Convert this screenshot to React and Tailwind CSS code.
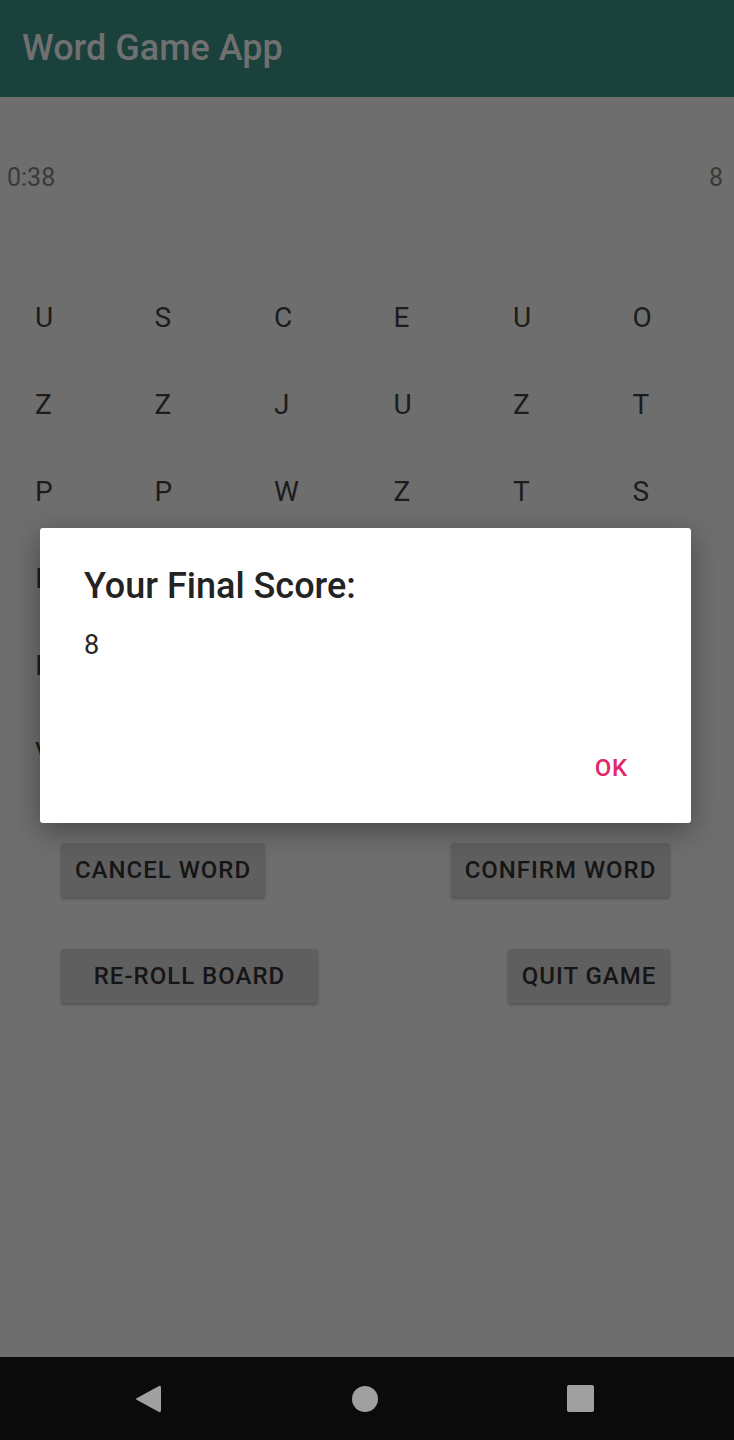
import React from 'react';

const board = [
  ['U', 'S', 'C', 'E', 'U', 'O'],
  ['Z', 'Z', 'J', 'U', 'Z', 'T'],
  ['P', 'P', 'W', 'Z', 'T', 'S'],
  ['I', 'A', 'R', 'O', 'E', 'N'],
  ['I', 'L', 'M', 'B', 'K', 'D'],
  ['V', 'G', 'H', 'Y', 'F', 'Q'],
];

const GameButton = ({ label, width }) => (
  <button
    className={`h-[54px] ${width} rounded-[3px] bg-[#5f5f5f] shadow-[0_2px_3px_rgba(0,0,0,0.25)] text-[24px] font-medium tracking-[1px] text-[#151515]`}
  >
    {label}
  </button>
);

export default function App() {
  return (
    <div
      className="relative flex min-h-[1440px] w-[734px] flex-col overflow-hidden bg-[#6e6e6e]"
      style={{ fontFamily: 'Roboto, "Noto Sans", sans-serif' }}
    >
      {/* toolbar */}
      <div className="flex h-[97px] items-center bg-[#1a413c] pl-[22px]">
        <span className="-mt-[2px] text-[36px] font-medium leading-none text-[#707070]">Word Game App</span>
      </div>

      <div className="flex flex-1 flex-col">
        {/* timer + score */}
        <div className="mt-[61px] flex h-[40px] items-center justify-between pl-[7px] pr-[11px] text-[25px] text-[#3a3a3a]">
          <span>0:38</span>
          <span>8</span>
        </div>

        {/* letter grid, rows 4-6 mostly sit behind the dialog */}
        <div className="mt-[76px] flex flex-col pl-[35px]">
          {board.map((row, r) => (
            <div key={r} className="flex h-[87px] items-center">
              {row.map((ch, c) => (
                <div
                  key={c}
                  className={`w-[119.5px] shrink-0 text-[28px] leading-none text-[#1c1c1c] ${r > 2 && c > 0 ? 'invisible' : ''}`}
                >
                  {ch}
                </div>
              ))}
            </div>
          ))}
        </div>

        {/* controls */}
        <div className="mt-[47px] flex justify-between pl-[61px] pr-[64px]">
          <GameButton label="CANCEL WORD" width="w-[204px]" />
          <GameButton label="CONFIRM WORD" width="w-[219px]" />
        </div>
        <div className="mt-[52px] flex justify-between pl-[61px] pr-[64px]">
          <GameButton label="RE-ROLL BOARD" width="w-[257px]" />
          <GameButton label="QUIT GAME" width="w-[162px]" />
        </div>
      </div>

      {/* system nav bar */}
      <div className="flex h-[83px] items-center bg-[#0b0b0b]">
        <div className="flex w-full items-center justify-between pl-[135px] pr-[140px]">
          <svg width="27" height="30" viewBox="0 0 27 30">
            <path d="M24 2 Q26 1 26 4 L26 26 Q26 29 24 28 L2 16 Q0 15 2 14 Z" fill="#a0a0a0" />
          </svg>
          <div className="h-[26px] w-[26px] rounded-full bg-[#a0a0a0]" />
          <div className="h-[27px] w-[27px] rounded-[2px] bg-[#a0a0a0]" />
        </div>
      </div>

      {/* final score dialog */}
      <div className="absolute left-[40px] top-[528px] flex h-[295px] w-[651px] flex-col rounded-[3px] bg-white pl-[44px] pr-[63px] shadow-[0_8px_28px_rgba(0,0,0,0.35)]">
        <div className="mt-[38px] text-[36px] font-medium leading-[40px] text-[#232323]">Your Final Score:</div>
        <div className="mt-[23px] text-[27px] leading-[32px] text-[#262626]">8</div>
        <div className="mt-[91px] flex justify-end">
          <span className="text-[24px] font-medium leading-[32px] tracking-[0.8px] text-[#e0286a]">OK</span>
        </div>
      </div>
    </div>
  );
}
